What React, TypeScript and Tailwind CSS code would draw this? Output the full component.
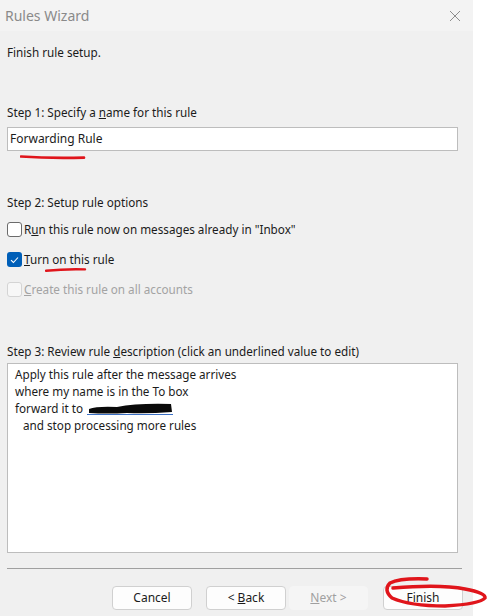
import React from "react";

const font = { fontFamily: '"Noto Sans", "Liberation Sans", sans-serif' };

const Box = ({ checked, disabled }: { checked?: boolean; disabled?: boolean }) => {
  if (checked) {
    return (
      <span className="w-[15px] h-[15px] rounded-[3px] bg-[#005fb8] flex items-center justify-center shrink-0">
        <svg width="9" height="8" viewBox="0 0 9 8" fill="none">
          <path d="M1 4.2 L3.4 6.5 L8 1.5" stroke="white" strokeWidth="1.1" />
        </svg>
      </span>
    );
  }
  return (
    <span
      className={`w-[15px] h-[15px] rounded-[3px] border shrink-0 ${disabled ? "border-[#d4d4d4] bg-[#f7f7f7]" : "border-[#6b6b6b] bg-white"}`}
    />
  );
};

const Btn = ({ children, disabled, w }: { children: React.ReactNode; disabled?: boolean; w: string }) => (
  <div
    className={`h-[24px] ${w} rounded-[4px] flex items-center justify-center text-[12px] ${disabled ? "bg-[#f5f5f5] text-[#a0a0a0] border border-[#f5f5f5]" : "bg-[#fdfdfd] text-[#1b1b1b] border border-[#d0d0d0]"}`}
  >
    {children}
  </div>
);

export default function App() {
  return (
    <div className="w-[490px] h-[616px] bg-white flex overflow-hidden" style={font}>
      <div className="w-[473px] h-full bg-[#f0f0f0] flex flex-col relative">
        {/* title bar */}
        <div className="h-[31px] bg-[#f3f3f3] flex items-center justify-between pl-[5px] pr-[12px]">
          <span className="text-[14px] text-[#8a8a8a]">Rules Wizard</span>
          <svg width="12" height="12" viewBox="0 0 12 12">
            <path d="M1 1 L11 11 M11 1 L1 11" stroke="#8d8d8d" strokeWidth="1" />
          </svg>
        </div>

        <div className="pl-[7px] pr-[15px] text-[11.7px] text-[#1b1b1b] flex flex-col">
          <div className="mt-[13px] h-[17px] leading-[17px]">Finish rule setup.</div>

          <div className="mt-[43px] h-[17px] leading-[17px]">
            Step 1: Specify a <u>n</u>ame for this rule
          </div>
          <div className="relative mt-[6px] h-[24px] w-[451px] bg-white border border-[#bdbdbd] flex items-center pl-[2px] text-[12px]">
            Forwarding Rule
            <svg className="absolute left-[12px] top-[26px]" width="66" height="6" viewBox="0 0 66 6">
              <path d="M1 2.5 Q30 4.5 64 3.6" stroke="#e0151b" strokeWidth="2.6" fill="none" strokeLinecap="round" />
            </svg>
          </div>

          <div className="mt-[43px] h-[17px] leading-[17px]">Step 2: Setup rule options</div>

          <div className="mt-[10px] flex items-center gap-[2px] h-[17px]">
            <Box />
            <span>
              R<u>u</u>n this rule now on messages already in "Inbox"
            </span>
          </div>
          <div className="mt-[13px] flex items-center gap-[2px] h-[17px] relative">
            <Box checked />
            <span>
              <u>T</u>urn on this rule
            </span>
            <svg className="absolute left-[38px] top-[16px]" width="42" height="6" viewBox="0 0 42 6">
              <path d="M1 3.8 Q20 1.8 40 2.4" stroke="#e0151b" strokeWidth="2.4" fill="none" strokeLinecap="round" />
            </svg>
          </div>
          <div className="mt-[13px] flex items-center gap-[2px] h-[17px] text-[#a3a3a3]">
            <Box disabled />
            <span>
              <u>C</u>reate this rule on all accounts
            </span>
          </div>

          <div className="mt-[45px] h-[17px] leading-[17px]">
            Step 3: Review rule <u>d</u>escription (click an underlined value to edit)
          </div>
          <div className="mt-[3px] h-[190px] w-[451px] bg-white border border-[#bdbdbd] pl-[7px] pt-[2px] leading-[17px]">
            <div>Apply this rule after the message arrives</div>
            <div>where my name is in the To box</div>
            <div className="flex items-center">
              forward it to
              <span className="ml-[4px] inline-block relative w-[86px] h-[13px]">
                <span className="absolute left-0 bottom-0 w-[86px] h-[1px] bg-[#3a6fc4]" />
                <svg className="absolute left-0 top-0" width="86" height="13" viewBox="0 0 86 13">
                  <path d="M2 7 Q10 4 30 5 Q50 1 84 2 L85 10 Q60 12 40 11 Q20 12 2 11 Z" fill="#0a0a0a" />
                </svg>
              </span>
            </div>
            <div className="pl-[8px]">and stop processing more rules</div>
          </div>

          <div className="mt-[15px] h-[1px] w-[455px] bg-[#a0a0a0]" />

          <div className="mt-[17px] flex items-center">
            <div className="ml-[105px]">
              <Btn w="w-[80px]">Cancel</Btn>
            </div>
            <div className="ml-[14px]">
              <Btn w="w-[80px]">
                &lt; <u className="ml-[3px]">B</u>ack
              </Btn>
            </div>
            <div className="ml-[3px]">
              <Btn w="w-[79px]" disabled>
                <u>N</u>ext &gt;
              </Btn>
            </div>
            <div className="ml-[15px]">
              <Btn w="w-[80px]">Finish</Btn>
            </div>
          </div>
        </div>

        {/* red scribble round Finish, drawn over the dialog edge */}
        <svg className="absolute left-[378px] top-[574px] overflow-visible" width="112" height="40" viewBox="378 574 112 40">
          <path
            d="M427 579 Q400 578 390 583 Q383 590 392 598 Q410 606 445 606 Q480 604 485 598 Q486 593 465 589 Q440 584 393 588"
            stroke="#e0151b"
            strokeWidth="3.5"
            fill="none"
            strokeLinecap="round"
          />
        </svg>
      </div>
    </div>
  );
}
